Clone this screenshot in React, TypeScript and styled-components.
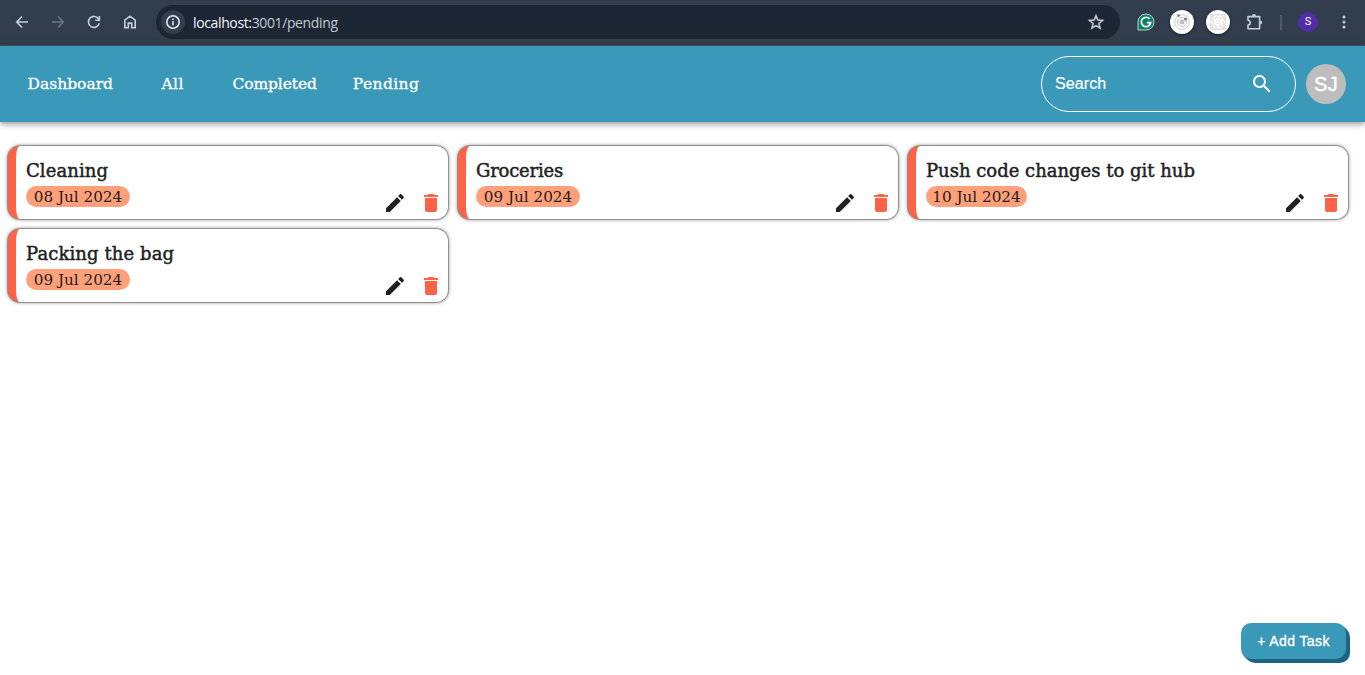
import React from "react";
import styled, { createGlobalStyle } from "styled-components";

const GlobalStyle = createGlobalStyle`
  * { box-sizing: border-box; }
  body { margin: 0; background: #fff; }
`;

const slab = `"Roboto Slab", "DejaVu Serif", serif`;
const sans = `"Liberation Sans", Arial, sans-serif`;

const Page = styled.div`
  height: 675px;
  display: flex;
  flex-direction: column;
  overflow: hidden;
`;

/* Browser bar */
const BrowserBar = styled.div`
  height: 46px;
  flex: none;
  display: flex;
  align-items: center;
  padding: 0 9px 1px 10px;
  background: #323d4d;
  border-bottom: 1px solid #4a4f59;
`;
const NavIcons = styled.div`
  display: flex;
  gap: 12px;
  width: 146px;
`;
const ToolIcon = styled.svg<{ $color?: string; $size?: number }>`
  width: ${(p) => p.$size ?? 24}px;
  height: ${(p) => p.$size ?? 24}px;
  flex: none;
  display: block;
  fill: none;
  stroke: ${(p) => p.$color ?? "#c3cddd"};
  stroke-width: 1.6;
`;
const AddressBar = styled.div`
  width: 964px;
  height: 34px;
  border-radius: 17px;
  background: #1c2635;
  display: flex;
  align-items: center;
  padding: 0 12px 0 5px;
`;
const InfoBadge = styled.div`
  width: 24px;
  height: 24px;
  border-radius: 50%;
  background: #323d4d;
`;
const Url = styled.div`
  flex: 1;
  margin-left: 8px;
  color: #c3c8d0;
  font: 14px "Open Sans", "Noto Sans", sans-serif;
  letter-spacing: -0.37px;
  b { font-weight: 400; color: #f2f5fa; }
`;
const Extensions = styled.div`
  flex: 1;
  display: flex;
  align-items: center;
  gap: 12px;
  margin-left: 14px;
`;
const ExtensionDisc = styled.svg`
  width: 24px;
  height: 24px;
  flex: none;
  border-radius: 50%;
  background: #fff;
  box-shadow: 0 1px 3px rgba(0, 0, 0, 0.5);
  fill: none;
`;
const BarDivider = styled.div`
  width: 2px;
  height: 15px;
  margin: 0 4px 0 2px;
  background: #4e5969;
`;
const ProfileDot = styled.div`
  width: 20px;
  height: 20px;
  border-radius: 50%;
  background: #512da8;
  color: #fff;
  font: 11px/20px Roboto, sans-serif;
  text-align: center;
`;

/* App header */
const Header = styled.header`
  height: 76px;
  flex: none;
  display: flex;
  align-items: center;
  padding: 0 19px 0 12px;
  background: #3a98b9;
  box-shadow: 0 2px 4px -1px rgba(0, 0, 0, 0.2), 0 4px 5px rgba(0, 0, 0, 0.14),
    0 1px 10px rgba(0, 0, 0, 0.12);
`;
const Tabs = styled.nav`
  flex: 1;
  display: flex;
`;
const Tab = styled.a<{ $width: number; $track: number }>`
  width: ${(p) => p.$width}px;
  text-align: center;
  white-space: nowrap;
  color: #fff;
  font: 15.5px/24px ${slab};
  letter-spacing: ${(p) => p.$track}px;
  -webkit-text-stroke: 0.3px #fff;
`;
const SearchBox = styled.div`
  width: 255px;
  height: 56px;
  border: 1px solid #fff;
  border-radius: 28px;
  display: flex;
  align-items: center;
  justify-content: space-between;
  padding: 0 21px 0 13px;
  color: #fff;
  font: 16px/23px ${sans};
`;
const SearchHint = styled.span`
  padding-bottom: 2px;
  letter-spacing: 0.1px;
  -webkit-text-stroke: 0.2px #fff;
`;
const Avatar = styled.div`
  width: 40px;
  height: 40px;
  margin-left: 10px;
  border-radius: 50%;
  background: #bdbdbd;
  color: #fff;
  font: 20px/40px ${sans};
  letter-spacing: 0.4px;
  -webkit-text-stroke: 0.4px #fff;
  text-align: center;
`;

/* Tasks */
const TaskGrid = styled.main`
  flex: 1;
  display: grid;
  grid-template-columns: repeat(3, 440px);
  grid-auto-rows: 73px;
  gap: 10px;
  padding: 24px 8px 0;
`;
const Card = styled.article`
  display: flex;
  justify-content: space-between;
  border-left: 8px solid #ff6347;
  border-radius: 12px;
  padding: 11px 5px 4px 10px;
  box-shadow: 0 0 0 1px rgba(0, 0, 0, 0.25), 0 0 4px rgba(0, 0, 0, 0.6);
  background: #fff;
  color: #212121;
`;
const CardTitle = styled.h2<{ $track: number }>`
  margin: 0;
  font: 18px/27px ${slab};
  letter-spacing: ${(p) => p.$track}px;
  -webkit-text-stroke: 0.45px #212121;
  white-space: nowrap;
`;
const DatePill = styled.div<{ $width: number }>`
  width: ${(p) => p.$width}px;
  height: 21px;
  margin-top: 2px;
  border-radius: 11px;
  background: #ffa07a;
  font: 15.2px/22px ${slab};
  text-align: center;
  white-space: nowrap;
`;
const Actions = styled.div`
  align-self: flex-end;
  display: flex;
  gap: 12px;
`;
const FilledIcon = styled.svg<{ $color: string }>`
  width: 24px;
  height: 24px;
  display: block;
  fill: ${(p) => p.$color};
`;
const Footer = styled.footer`
  display: flex;
  justify-content: flex-end;
  padding: 0 19px 16px;
`;
const AddButton = styled.button`
  width: 105px;
  height: 36px;
  border: 0;
  padding: 0;
  border-radius: 10px;
  background: #3a98b9;
  color: #fff;
  font: 14px ${sans};
  letter-spacing: 0.4px;
  -webkit-text-stroke: 0.35px #fff;
  box-shadow: 1px 1px #1c6583, 2px 2px #1c6583, 3px 3px #1c6583, 4px 4px #1c6583;
`;

const tabs = [
  { label: "Dashboard", width: 116.6, track: 0 },
  { label: "All", width: 88, track: 0.4 },
  { label: "Completed", width: 116, track: -0.1 },
  { label: "Pending", width: 107, track: 0.4 },
];
const tasks = [
  { title: "Cleaning", date: "08 Jul 2024", pill: 104, track: 0.1 },
  { title: "Groceries", date: "09 Jul 2024", pill: 104, track: -0.2 },
  { title: "Push code changes to git hub", date: "10 Jul 2024", pill: 101, track: 0 },
  { title: "Packing the bag", date: "09 Jul 2024", pill: 104, track: 0.1 },
];

function BrowserChrome() {
  return (
    <BrowserBar>
      <NavIcons>
        <ToolIcon viewBox="0 0 24 24"><path d="M18 12H7M12 6.5 6.7 12l5.3 5.5" /></ToolIcon>
        <ToolIcon viewBox="0 0 24 24" $color="#6d7788"><path d="M6 12h11M12 6.5l5.3 5.5-5.3 5.5" /></ToolIcon>
        <ToolIcon viewBox="0 0 24 24"><path d="M16.8 9.2A5.5 5.5 0 1 0 17.3 13.3M17.4 6v4.2h-4.2" /></ToolIcon>
        <ToolIcon viewBox="0 0 24 24"><path d="M6.8 17.7v-7.6L12 6.2l5.2 3.9v7.6h-3.5v-4.6h-3.4v4.6z" /></ToolIcon>
      </NavIcons>
      <AddressBar>
        <InfoBadge>
          <ToolIcon viewBox="0 0 24 24" $color="#e3e8f0"><circle cx="12" cy="12" r="6.2" /><path d="M12 11.3v4M12 8.4v1.6" /></ToolIcon>
        </InfoBadge>
        <Url><b>localhost:</b>3001/pending</Url>
        <ToolIcon viewBox="0 0 24 24" $color="#c7cbd1">
          <path d="m12 5.8 1.8 4.3 4.7.4-3.6 3 1.1 4.6-4-2.5-4 2.5 1.1-4.6-3.6-3 4.7-.4z" />
        </ToolIcon>
      </AddressBar>
      <Extensions>
        <ToolIcon viewBox="0 0 24 24">
          <path d="M4 20v-8a8 8 0 1 1 8 8z" fill="#0b7f68" stroke="#dff1ed" strokeWidth=".8" />
          <path d="M15.6 8.9A4.7 4.7 0 1 0 16.7 12.6H12.8M16.7 12.6 15 15.4" stroke="#fff" strokeWidth="1.7" />
        </ToolIcon>
        <ExtensionDisc viewBox="0 0 24 24">
          <circle cx="12" cy="12" r="7.3" stroke="#c9c9c9" />
          <circle cx="12" cy="12" r="4.5" stroke="#c2c2c2" />
          <circle cx="12" cy="12" r="2.5" fill="#c0c0c0" />
          <circle cx="8.5" cy="5.5" r="1.3" fill="#777" />
          <circle cx="15.5" cy="9" r="1.5" fill="#777" />
        </ExtensionDisc>
        <ExtensionDisc viewBox="0 0 24 24">
          <rect x="4" y="4" width="16" height="16" rx="1" fill="#e4e4e4" />
          <g stroke="#fff" strokeWidth=".9">
            <ellipse cx="12" cy="12" rx="6.6" ry="2.6" />
            <ellipse cx="12" cy="12" rx="6.6" ry="2.6" transform="rotate(60 12 12)" />
            <ellipse cx="12" cy="12" rx="6.6" ry="2.6" transform="rotate(120 12 12)" />
            <circle cx="12" cy="12" r="1" fill="#fff" />
          </g>
        </ExtensionDisc>
        <ToolIcon viewBox="0 0 24 24">
          <path d="M6 6.6h11.6v12.1H6v-3.6c2.9-.6 2.9-4.3 0-4.9z" strokeLinejoin="round" />
          <path d="M10 6a2 2 0 0 1 4 0zM18.2 10.4a2 2 0 0 1 0 4z" fill="#c3cddd" stroke="none" />
        </ToolIcon>
        <BarDivider />
        <ProfileDot>S</ProfileDot>
        <ToolIcon viewBox="0 0 24 24">
          <g fill="#c3cddd" stroke="none">
            <circle cx="14" cy="7" r="1.5" /><circle cx="14" cy="12" r="1.5" /><circle cx="14" cy="17" r="1.5" />
          </g>
        </ToolIcon>
      </Extensions>
    </BrowserBar>
  );
}

export default function App() {
  return (
    <Page>
      <GlobalStyle />
      <BrowserChrome />
      <Header>
        <Tabs>
          {tabs.map((t) => (
            <Tab key={t.label} $width={t.width} $track={t.track}>{t.label}</Tab>
          ))}
        </Tabs>
        <SearchBox>
          <SearchHint>Search</SearchHint>
          <FilledIcon viewBox="0 0 24 24" $color="#fff">
            <path d="M15.5 14h-.79l-.28-.27C15.41 12.59 16 11.11 16 9.5 16 5.91 13.09 3 9.5 3S3 5.91 3 9.5 5.91 16 9.5 16c1.61 0 3.09-.59 4.23-1.57l.27.28v.79l5 4.99L20.49 19zm-6 0C7.01 14 5 11.99 5 9.5S7.01 5 9.5 5 14 7.01 14 9.5 11.99 14 9.5 14" />
          </FilledIcon>
        </SearchBox>
        <Avatar>SJ</Avatar>
      </Header>
      <TaskGrid>
        {tasks.map((t) => (
          <Card key={t.title}>
            <div>
              <CardTitle $track={t.track}>{t.title}</CardTitle>
              <DatePill $width={t.pill}>{t.date}</DatePill>
            </div>
            <Actions>
              <FilledIcon viewBox="0 0 24 24" $color="#212121">
                <path d="M3 17.25V21h3.75L17.81 9.94l-3.75-3.75zM20.71 7.04c.39-.39.39-1.02 0-1.41l-2.34-2.34a.996.996 0 0 0-1.41 0l-1.83 1.83 3.75 3.75z" />
              </FilledIcon>
              <FilledIcon viewBox="0 0 24 24" $color="#ff6347">
                <path d="M6 19c0 1.1.9 2 2 2h8c1.1 0 2-.9 2-2V7H6zM19 4h-3.5l-1-1h-5l-1 1H5v2h14z" />
              </FilledIcon>
            </Actions>
          </Card>
        ))}
      </TaskGrid>
      <Footer>
        <AddButton>+ Add Task</AddButton>
      </Footer>
    </Page>
  );
}
